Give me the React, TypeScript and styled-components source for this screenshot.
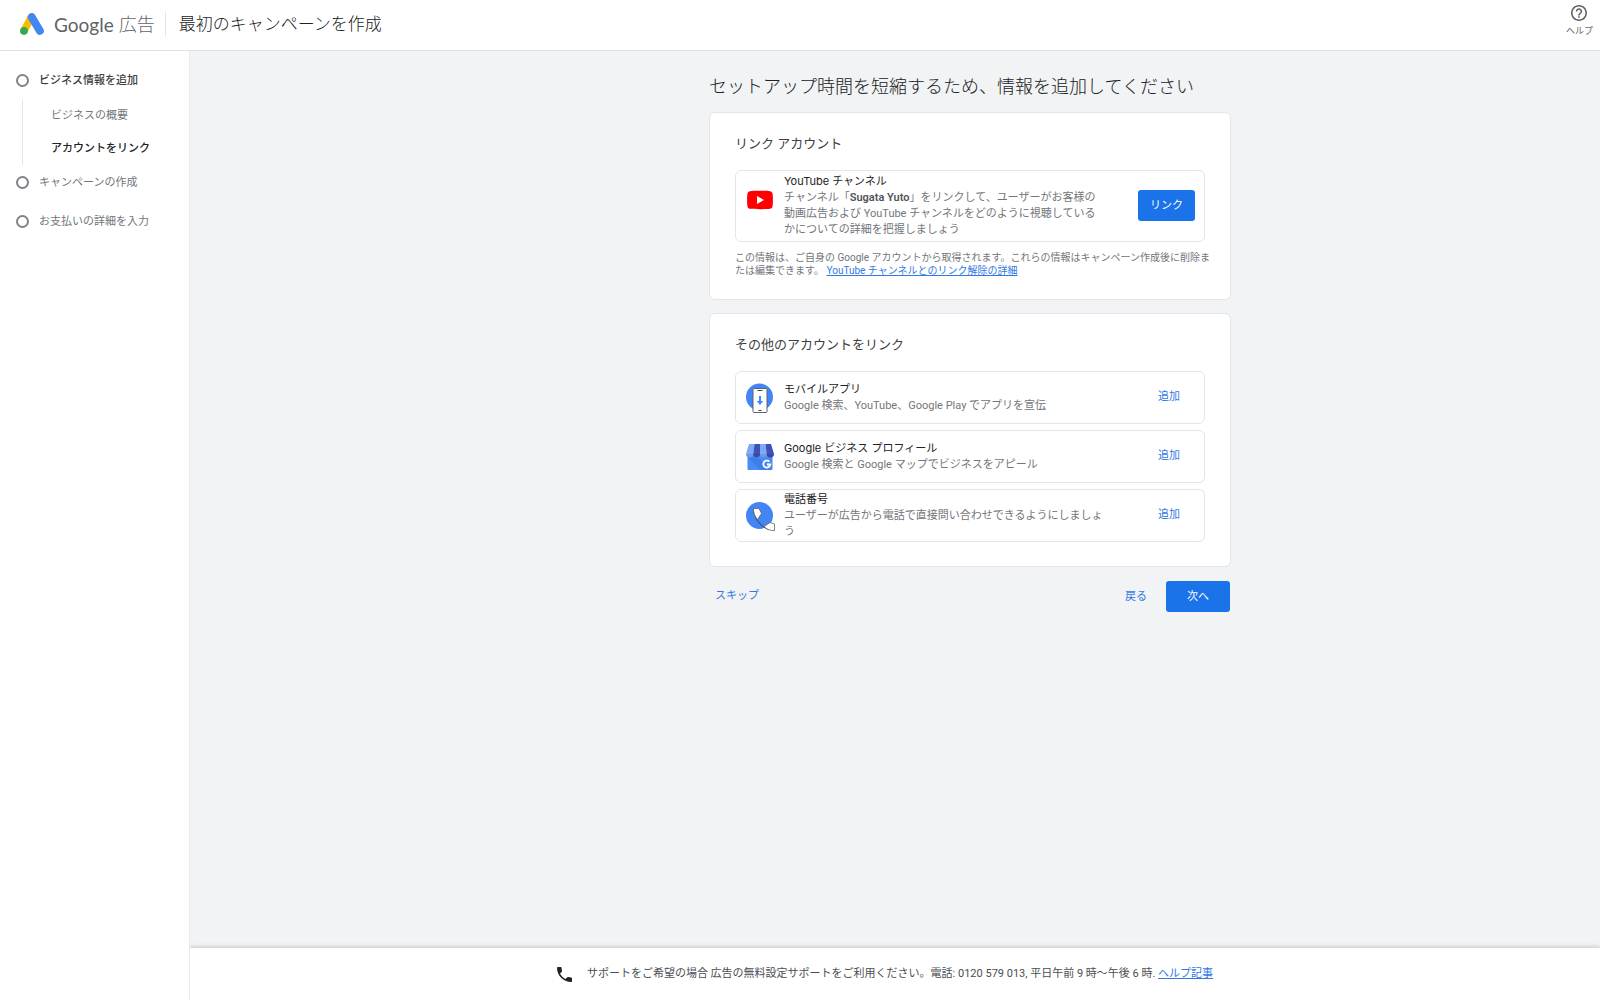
import React from 'react';
import styled, { createGlobalStyle } from 'styled-components';

const sans = `Roboto, "Noto Sans CJK JP", sans-serif`;
const display = `Inter, "Noto Sans CJK JP", sans-serif`;

const color = {
  text: '#202124',
  muted: '#72767a',
  icon: '#5f6368',
  line: '#e3e5e8',
  canvas: '#f1f3f4',
  blue: '#1a73e8',
  link: '#3079e4',
};

const GlobalStyle = createGlobalStyle`
  *, *::before, *::after { box-sizing: border-box; }
  body {
    margin: 0;
    font-family: ${sans};
    font-size: 11px;
    line-height: 16px;
    color: ${color.text};
    background: #fff;
  }
  h1, h2, h3, p, ul, ol { margin: 0; padding: 0; font-weight: 400; }
  ul, ol { list-style: none; }
  button { font: inherit; cursor: pointer; }
  svg { display: block; flex: none; }
`;

const Page = styled.div`
  display: flex;
  flex-direction: column;
  min-height: 100vh;
`;

const Header = styled.header`
  display: flex;
  align-items: center;
  height: 51px;
  padding: 0 7px 2px 20px;
  border-bottom: 1px solid #dfe1e4;
`;

const Brand = styled.div`
  display: flex;
  align-items: center;
  gap: 5px;
  margin-left: 10px;
  padding-right: 10px;
  border-right: 1px solid ${color.line};
  line-height: 25px;
  font-size: 18px;
  font-weight: 300;
  color: ${color.icon};
`;

const BrandName = styled.span`
  font-family: Lato, sans-serif;
  font-size: 19px;
  font-weight: 400;
`;

const PageTitle = styled.span`
  margin-left: 13px;
  font-size: 17px;
  line-height: 25px;
  font-weight: 300;
`;

const HelpButton = styled.button`
  display: flex;
  flex-direction: column;
  align-items: center;
  align-self: flex-start;
  gap: 3px;
  margin-left: auto;
  padding: 5px 0 0;
  border: 0;
  background: none;
  color: ${color.icon};
  font-size: 9px;
  line-height: 14px;
`;

const Body = styled.div`
  display: flex;
  flex: 1;
`;

const Sidebar = styled.nav`
  flex: none;
  width: 190px;
  padding: 20px 16px;
  border-right: 1px solid #e8eaed;
`;

const Step = styled.div<{ $active?: boolean }>`
  display: flex;
  align-items: flex-start;
  gap: 10px;
  line-height: 20px;
  font-weight: ${p => (p.$active ? 500 : 400)};
  color: ${p => (p.$active ? '#3c4043' : color.muted)};

  &::before {
    content: '';
    width: 13px;
    height: 13px;
    margin-top: 3px;
    border: 2px solid #7f8387;
    border-radius: 50%;
  }
`;

const StepItem = styled.li`
  & + & { margin-top: 8px; }
  & + & + & { margin-top: 19px; }
`;

const SubSteps = styled.ol`
  display: grid;
  gap: 15px;
  margin: 9px 0 0 6px;
  padding: 7px 0 7px 28px;
  border-left: 1px solid ${color.line};
  line-height: 18px;
`;

const SubStep = styled.li<{ $active?: boolean }>`
  font-weight: ${p => (p.$active ? 500 : 400)};
  color: ${p => (p.$active ? color.text : color.muted)};
`;

const Content = styled.div`
  display: flex;
  flex: 1;
  flex-direction: column;
  min-width: 0;
  overflow: hidden;
  background: ${color.canvas};
`;

const Main = styled.main`
  flex: 1;
  padding: 24px 0 24px 150px;
`;

const Column = styled.div`
  max-width: 522px;
  margin: 0 auto;
`;

const Heading = styled.h1`
  margin-bottom: 13px;
  font-size: 18px;
  line-height: 24px;
  font-weight: 300;
`;

const Card = styled.section`
  padding: 22px 25px 24px;
  border: 1px solid ${color.line};
  border-radius: 6px;
  background: #fff;

  & + & { margin-top: 13px; }
`;

const CardTitle = styled.h2`
  margin-bottom: 17px;
  font-size: 13px;
  line-height: 18px;
  color: #3c4043;
`;

const Rows = styled.ul`
  display: grid;
  gap: 6px;
`;

const IconSlot = styled.span`
  display: flex;
  flex: none;
  width: 28px;

  svg { overflow: visible; }
`;

const Row = styled.li<{ $tall?: boolean }>`
  display: flex;
  align-items: center;
  gap: 10px;
  min-height: ${p => (p.$tall ? 72 : 53)}px;
  padding: 0 9px 1px 10px;
  border: 1px solid ${color.line};
  border-radius: 6px;

  ${IconSlot} {
    align-self: ${p => (p.$tall ? 'flex-start' : 'center')};
    padding-top: ${p => (p.$tall ? 15 : 2)}px;
  }
`;

const RowText = styled.div`
  flex: 0 1 321px;
`;

const RowTitle = styled.h3`
  padding-bottom: 1px;
  font-family: ${display};
  font-size: 11px;
  line-height: 16px;
`;

const RowDescription = styled.p`
  color: ${color.muted};

  strong { font-weight: 600; color: #50545a; }
`;

const Button = styled.button<{ $wide?: boolean }>`
  min-width: ${p => (p.$wide ? 64 : 57)}px;
  height: 31px;
  padding: 0 10px;
  border: 0;
  border-radius: 3px;
  background: ${color.blue};
  color: #fff;
`;

const TextButton = styled.button`
  height: 31px;
  padding: 0 15px;
  border: 0;
  background: none;
  color: ${color.link};
`;

const RowAction = styled.div`
  margin-left: auto;
`;

const Footnote = styled.p`
  margin: 9px -8px -2px 0;
  font-size: 10px;
  line-height: 13px;
  color: ${color.muted};
`;

const Link = styled.a`
  color: ${color.link};
  text-decoration: underline;
`;

const Actions = styled.div`
  display: flex;
  align-items: center;
  gap: 4px;
  margin-top: 14px;
  padding-right: 1px;
`;

const SkipButton = styled(TextButton)`
  margin-right: auto;
  padding: 0 6px 2px;
`;

const Support = styled.footer`
  display: flex;
  align-items: center;
  justify-content: center;
  gap: 15px;
  height: 52px;
  padding-right: 20px;
  background: #fff;
  box-shadow: 0 -1px 4px rgba(60, 64, 67, 0.25);
  color: #4a4e52;
`;

const AdsLogo = () => (
  <svg width="24" height="22" viewBox="0 0 24 22" aria-hidden="true">
    <path d="M11.5 4 4 17.8" stroke="#fbbc04" strokeWidth="7.6" strokeLinecap="round" />
    <path d="M11.8 4.2 19.8 17.8" stroke="#4285f4" strokeWidth="8" strokeLinecap="round" />
    <circle cx="4" cy="17.8" r="3.9" fill="#34a853" />
  </svg>
);

const HelpIcon = () => (
  <svg width="16" height="16" viewBox="2 2 20 20" fill="currentColor" aria-hidden="true">
    <path d="M11 18h2v-2h-2v2zm1-16C6.48 2 2 6.48 2 12s4.48 10 10 10 10-4.48 10-10S17.52 2 12 2zm0 18c-4.41 0-8-3.59-8-8s3.59-8 8-8 8 3.59 8 8-3.59 8-8 8zm0-14c-2.21 0-4 1.79-4 4h2c0-1.1.9-2 2-2s2 .9 2 2c0 2-3 1.75-3 5h2c0-2.25 3-2.5 3-5 0-2.21-1.79-4-4-4z" />
  </svg>
);

const YouTubeIcon = () => (
  <svg width="28" height="28" viewBox="0 0 28 28" aria-hidden="true">
    <path d="M4 5.2C7 4.7 21 4.7 24 5.2c1.600.3 2.400 1.200 2.600 2.800.4 3 .4 9 0 12-.2 1.600-1 2.500-2.600 2.800-3 .5-17 .5-20 0-1.600-.3-2.400-1.200-2.600-2.800-.4-3-.4-9 0-12C1.600 6.400 2.400 5.500 4 5.200z" fill="#f00" />
    <path d="M11 10v8l7-4z" fill="#fff" />
  </svg>
);

const MobileIcon = () => (
  <svg width="28" height="30" viewBox="0 0 28 30" aria-hidden="true">
    <circle cx="13.500" cy="14" r="13.500" fill="#4285f4" />
    <rect x="7" y="5.500" width="14" height="24" rx="1" fill="#fff" stroke="#5f6368" />
    <path d="M11.500 7.500h5M12.500 27.500h3" stroke="#3c4043" />
    <path d="M14 13v6" stroke="#4285f4" strokeWidth="2" />
    <path d="M10.800 18h6.400L14 22z" fill="#4285f4" />
  </svg>
);

const BusinessIcon = () => (
  <svg width="28" height="28" viewBox="0 0 28 28" aria-hidden="true">
    <path d="M1.500 10h25v16a1 1 0 0 1-1 1h-23a1 1 0 0 1-1-1z" fill="#4a8af4" />
    <path d="M11 14l14 13H14L1.500 14z" fill="#3f7de8" />
    <path d="M3 1h5.500L7.500 11H0z" fill="#7baaf7" />
    <path d="M8.500 1H14v10H7.300z" fill="#3f51b5" />
    <path d="M14 1h5.500l1.200 10H14z" fill="#7baaf7" />
    <path d="M19.500 1H25l3 10h-7.300z" fill="#3f51b5" />
    <path d="M0 11a3.500 3.300 0 0 0 7.200 0z" fill="#709be0" />
    <path d="M7.200 11a3.400 3.300 0 0 0 6.800 0z" fill="#3949a3" />
    <path d="M14 11a3.400 3.300 0 0 0 6.800 0z" fill="#709be0" />
    <path d="M20.800 11a3.500 3.300 0 0 0 7.200 0z" fill="#3949a3" />
    <path d="M23.300 18.600a3.500 3.500 0 1 0 1 2.900h-3.300" fill="none" stroke="#fff" strokeWidth="1.800" />
  </svg>
);

const CallIcon = () => (
  <svg width="30" height="30" viewBox="0 0 30 30" aria-hidden="true">
    <circle cx="13.500" cy="14.500" r="13.500" fill="#4285f4" />
    <path d="M7.500 7.500c0 9 6.500 18 15 21" fill="none" stroke="#3c4043" />
    <path d="M7.500 7.500h5.500l2.500 5-4 6C8.500 15.500 7.500 11.500 7.500 7.500z" fill="#fff" stroke="#5f6368" strokeWidth=".8" />
    <path d="M18 25.500l6-4 4.500 1.500v6.500c-4 .3-7.500-.8-10.500-4z" fill="#fff" stroke="#5f6368" strokeWidth=".8" />
  </svg>
);

const PhoneIcon = () => (
  <svg width="15" height="15" viewBox="3 3 18 18" fill="#202124" aria-hidden="true">
    <path d="M6.620 10.790c1.440 2.830 3.760 5.140 6.590 6.590l2.200-2.200c.27-.27.67-.36 1.020-.24 1.120.37 2.330.57 3.570.57.55 0 1 .45 1 1V20c0 .55-.45 1-1 1-9.390 0-17-7.610-17-17 0-.55.45-1 1-1h3.500c.55 0 1 .45 1 1 0 1.250.2 2.450.57 3.570.11.35.03.74-.25 1.020l-2.200 2.200z" />
  </svg>
);

const accounts = [
  { title: 'モバイルアプリ', text: 'Google 検索、YouTube、Google Play でアプリを宣伝', icon: <MobileIcon /> },
  { title: 'Google ビジネス プロフィール', text: 'Google 検索と Google マップでビジネスをアピール', icon: <BusinessIcon /> },
  { title: '電話番号', text: 'ユーザーが広告から電話で直接問い合わせできるようにしましょう', icon: <CallIcon /> },
];

export default function App() {
  return (
    <Page lang="ja">
      <GlobalStyle />
      <Header>
        <AdsLogo />
        <Brand>
          <BrandName>Google</BrandName>
          <span>広告</span>
        </Brand>
        <PageTitle>最初のキャンペーンを作成</PageTitle>
        <HelpButton type="button">
          <HelpIcon />
          ヘルプ
        </HelpButton>
      </Header>
      <Body>
        <Sidebar>
          <ol>
            <StepItem>
              <Step $active>ビジネス情報を追加</Step>
              <SubSteps>
                <SubStep>ビジネスの概要</SubStep>
                <SubStep $active>アカウントをリンク</SubStep>
              </SubSteps>
            </StepItem>
            <StepItem><Step>キャンペーンの作成</Step></StepItem>
            <StepItem><Step>お支払いの詳細を入力</Step></StepItem>
          </ol>
        </Sidebar>
        <Content>
          <Main>
            <Column>
              <Heading>セットアップ時間を短縮するため、情報を追加してください</Heading>
              <Card>
                <CardTitle>リンク アカウント</CardTitle>
                <Rows>
                  <Row $tall>
                    <IconSlot><YouTubeIcon /></IconSlot>
                    <RowText>
                      <RowTitle>YouTube チャンネル</RowTitle>
                      <RowDescription>
                        チャンネル「<strong>Sugata Yuto</strong>」をリンクして、ユーザーがお客様の動画広告および YouTube チャンネルをどのように視聴しているかについての詳細を把握しましょう
                      </RowDescription>
                    </RowText>
                    <RowAction><Button type="button">リンク</Button></RowAction>
                  </Row>
                </Rows>
                <Footnote>
                  この情報は、ご自身の Google アカウントから取得されます。これらの情報はキャンペーン作成後に削除または編集できます。{' '}
                  <Link href="#unlink">YouTube チャンネルとのリンク解除の詳細</Link>
                </Footnote>
              </Card>
              <Card>
                <CardTitle>その他のアカウントをリンク</CardTitle>
                <Rows>
                  {accounts.map(a => (
                    <Row key={a.title}>
                      <IconSlot>{a.icon}</IconSlot>
                      <RowText>
                        <RowTitle>{a.title}</RowTitle>
                        <RowDescription>{a.text}</RowDescription>
                      </RowText>
                      <RowAction><TextButton type="button">追加</TextButton></RowAction>
                    </Row>
                  ))}
                </Rows>
              </Card>
              <Actions>
                <SkipButton type="button">スキップ</SkipButton>
                <TextButton type="button">戻る</TextButton>
                <Button type="button" $wide>次へ</Button>
              </Actions>
            </Column>
          </Main>
          <Support>
            <PhoneIcon />
            <p>
              サポートをご希望の場合 広告の無料設定サポートをご利用ください。電話: 0120 579 013, 平日午前 9 時〜午後 6 時.{' '}
              <Link href="#help">ヘルプ記事</Link>
            </p>
          </Support>
        </Content>
      </Body>
    </Page>
  );
}
